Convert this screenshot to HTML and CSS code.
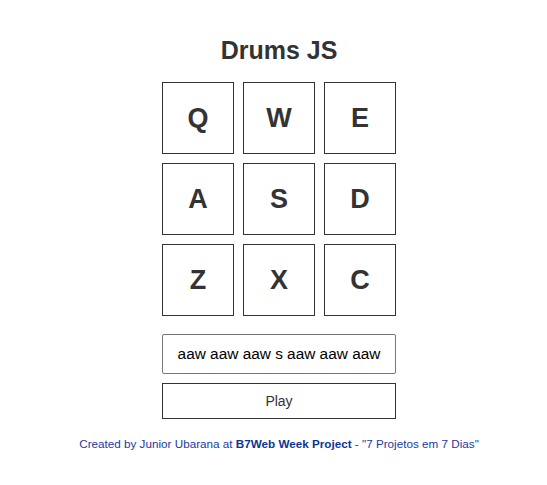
FILE: index.html
```html
<!DOCTYPE html>
<html>
<head>
<meta charset="utf-8">
<link rel="stylesheet" href="styles.css">
</head>
<body>
<main class="app">
  <h1 class="title">Drums JS</h1>
  <div class="keys">
    <div class="key">Q</div>
    <div class="key">W</div>
    <div class="key">E</div>
    <div class="key">A</div>
    <div class="key">S</div>
    <div class="key">D</div>
    <div class="key">Z</div>
    <div class="key">X</div>
    <div class="key">C</div>
  </div>
  <div class="composer">
    <input class="input" type="text" value="aaw aaw aaw s aaw aaw aaw">
    <button class="play">Play</button>
  </div>
  <p class="footer">Created by Junior Ubarana at <strong>B7Web Week Project</strong> - "7 Projetos em 7 Dias"</p>
</main>
</body>
</html>
```
FILE: styles.css
```css
html, body {
  margin: 0;
  padding: 0;
  background: #fff;
}
body {
  font-family: "Liberation Sans", Arial, sans-serif;
  color: #333;
}
.app {
  display: flex;
  flex-direction: column;
  align-items: center;
  padding-top: 36px;
  padding-left: 11px;
}
.title {
  margin: 0;
  font-size: 25px;
  line-height: 28px;
  font-weight: bold;
  color: #333;
}
.keys {
  margin-top: 18px;
  display: grid;
  grid-template-columns: repeat(3, 72px);
  grid-auto-rows: 72px;
  gap: 9px;
}
.key {
  box-sizing: border-box;
  border: 1px solid #333;
  display: flex;
  align-items: center;
  justify-content: center;
  font-size: 27px;
  font-weight: bold;
  color: #333;
}
.composer {
  margin-top: 18px;
  width: 234px;
  display: flex;
  flex-direction: column;
  gap: 9px;
}
.input {
  box-sizing: border-box;
  width: 234px;
  height: 40px;
  margin: 0;
  border: 1px solid #767676;
  border-radius: 2px;
  padding: 0 4px;
  font-family: "Liberation Sans", Arial, sans-serif;
  font-size: 15.4px;
  color: #000;
  text-align: center;
  outline: none;
}
.play {
  box-sizing: border-box;
  width: 234px;
  height: 36px;
  margin: 0;
  border: 1px solid #333;
  background: #fff;
  font-family: "Liberation Sans", Arial, sans-serif;
  font-size: 14px;
  color: #333;
}
.footer {
  margin: 18px 0 0;
  font-size: 11.7px;
  line-height: 14px;
  color: #1c3aa0;
}
.footer strong {
  color: #0d3494;
}
```
